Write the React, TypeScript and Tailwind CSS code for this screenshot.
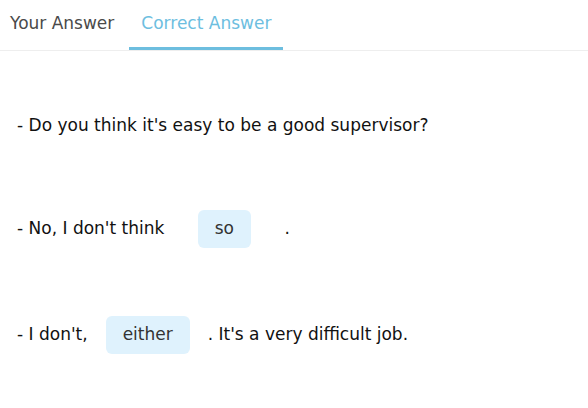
import React from 'react';

const Chip: React.FC<{ word: string }> = ({ word }) => (
  <span className="inline-flex w-[120px] justify-center">
    <span className="inline-flex h-[38px] items-center rounded-[6px] bg-[#dff2fd] px-[17px] text-[#333]">
      {word}
    </span>
  </span>
);

export default function App() {
  return (
    <div className="h-[408px] w-[588px] bg-white font-['DejaVu_Sans',Verdana,sans-serif] text-[17px] text-[#111]">
      {/* Tabs */}
      <div className="flex h-[51px] border-b border-[#eeeeee] px-[10px] text-[17px]">
        <div className="flex h-full items-center pb-[2px] text-[#4a4a4a]">Your Answer</div>
        <div className="ml-[15px] flex h-full items-center border-b-[3px] border-[#6dbedf] px-[12px] pt-[1px] text-[#6dbedf]">
          Correct Answer
        </div>
      </div>

      <div className="px-[17px]">
        <div className="flex h-[38px] items-center mt-[56px]">
          - Do you think it's easy to be a good supervisor?
        </div>

        <div className="mt-[65px] flex h-[38px] items-center whitespace-pre">
          <span>- No, I don't think</span>
          <Chip word="so" />
          <span>.</span>
        </div>

        <div className="mt-[68px] flex h-[38px] items-center whitespace-pre">
          <span>- I don't,</span>
          <Chip word="either" />
          <span>. It's a very difficult job.</span>
        </div>
      </div>
    </div>
  );
}
